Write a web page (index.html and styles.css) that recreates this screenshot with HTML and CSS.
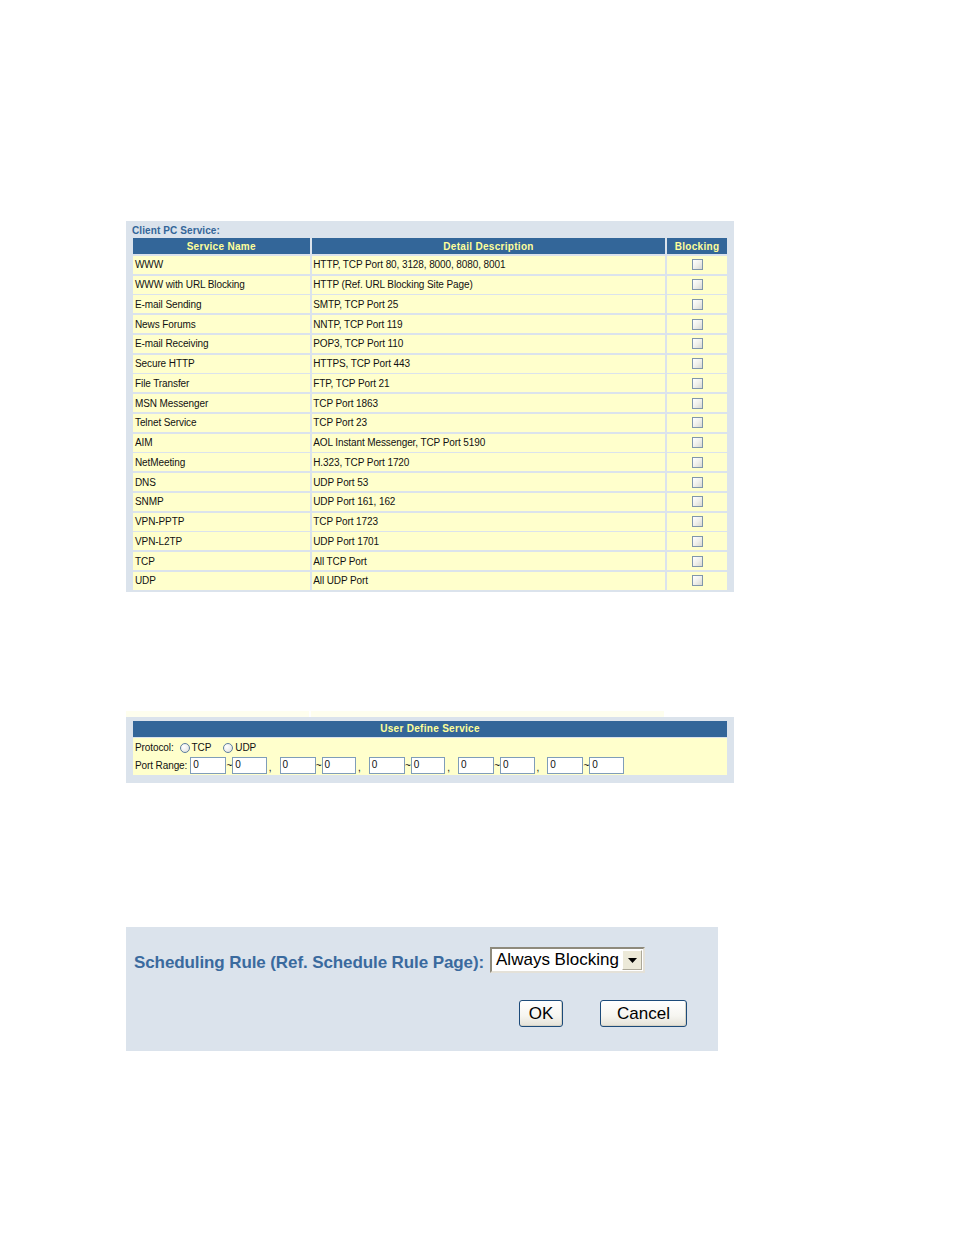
FILE: index.html
```html
<!DOCTYPE html>
<html>
<head>
<meta charset="utf-8">
<title>Client PC Service</title>
<link rel="stylesheet" href="styles.css">
</head>
<body>
<div class="page">
  <section class="panel panel-services">
    <div class="panel-title">Client PC Service:</div>
    <div class="svc-grid">
      <div class="hd">Service Name</div>
      <div class="hd">Detail Description</div>
      <div class="hd">Blocking</div>

      <div class="cell">WWW</div><div class="cell desc">HTTP, TCP Port 80, 3128, 8000, 8080, 8001</div><div class="cell chk"><span class="cbox"></span></div>
      <div class="cell">WWW with URL Blocking</div><div class="cell desc">HTTP (Ref. URL Blocking Site Page)</div><div class="cell chk"><span class="cbox"></span></div>
      <div class="cell">E-mail Sending</div><div class="cell desc">SMTP, TCP Port 25</div><div class="cell chk"><span class="cbox"></span></div>
      <div class="cell">News Forums</div><div class="cell desc">NNTP, TCP Port 119</div><div class="cell chk"><span class="cbox"></span></div>
      <div class="cell">E-mail Receiving</div><div class="cell desc">POP3, TCP Port 110</div><div class="cell chk"><span class="cbox"></span></div>
      <div class="cell">Secure HTTP</div><div class="cell desc">HTTPS, TCP Port 443</div><div class="cell chk"><span class="cbox"></span></div>
      <div class="cell">File Transfer</div><div class="cell desc">FTP, TCP Port 21</div><div class="cell chk"><span class="cbox"></span></div>
      <div class="cell">MSN Messenger</div><div class="cell desc">TCP Port 1863</div><div class="cell chk"><span class="cbox"></span></div>
      <div class="cell">Telnet Service</div><div class="cell desc">TCP Port 23</div><div class="cell chk"><span class="cbox"></span></div>
      <div class="cell">AIM</div><div class="cell desc">AOL Instant Messenger, TCP Port 5190</div><div class="cell chk"><span class="cbox"></span></div>
      <div class="cell">NetMeeting</div><div class="cell desc">H.323, TCP Port 1720</div><div class="cell chk"><span class="cbox"></span></div>
      <div class="cell">DNS</div><div class="cell desc">UDP Port 53</div><div class="cell chk"><span class="cbox"></span></div>
      <div class="cell">SNMP</div><div class="cell desc">UDP Port 161, 162</div><div class="cell chk"><span class="cbox"></span></div>
      <div class="cell">VPN-PPTP</div><div class="cell desc">TCP Port 1723</div><div class="cell chk"><span class="cbox"></span></div>
      <div class="cell">VPN-L2TP</div><div class="cell desc">UDP Port 1701</div><div class="cell chk"><span class="cbox"></span></div>
      <div class="cell">TCP</div><div class="cell desc">All TCP Port</div><div class="cell chk"><span class="cbox"></span></div>
      <div class="cell">UDP</div><div class="cell desc">All UDP Port</div><div class="cell chk"><span class="cbox"></span></div>
    </div>
  </section>

  <div class="cut-strip">
    <div class="cut-a"></div><div class="cut-b"></div><div class="cut-c"></div>
  </div>

  <section class="panel panel-user">
    <div class="hd hd-bar">User Define Service</div>
    <div class="user-body">
      <div class="urow">
        <span class="lbl">Protocol:</span>
        <span class="radio"></span><span class="rlbl">TCP</span>
        <span class="radio radio-2"></span><span class="rlbl">UDP</span>
      </div>
      <div class="urow">
        <span class="lbl lbl-port">Port Range:</span>
        <span class="pair"><span class="inp inp-a">0</span><span class="tilde">~</span><span class="inp inp-b">0</span><span class="comma">,</span></span>
        <span class="pair"><span class="inp inp-a">0</span><span class="tilde">~</span><span class="inp inp-b">0</span><span class="comma">,</span></span>
        <span class="pair"><span class="inp inp-a">0</span><span class="tilde">~</span><span class="inp inp-b">0</span><span class="comma">,</span></span>
        <span class="pair"><span class="inp inp-a">0</span><span class="tilde">~</span><span class="inp inp-b">0</span><span class="comma">,</span></span>
        <span class="pair"><span class="inp inp-a">0</span><span class="tilde">~</span><span class="inp inp-b">0</span></span>
      </div>
    </div>
  </section>

  <section class="panel panel-sched">
    <div class="sched-row">
      <span class="sched-title">Scheduling Rule (Ref. Schedule Rule Page):</span>
      <span class="select">
        <span class="select-text">Always Blocking</span>
        <span class="select-btn"><svg width="9" height="5" viewBox="0 0 9 5"><path d="M0 0h9L4.5 5z" fill="#000"/></svg></span>
      </span>
    </div>
    <div class="btn-row">
      <span class="btn btn-ok">OK</span>
      <span class="btn btn-cancel">Cancel</span>
    </div>
  </section>
</div>
</body>
</html>
```

FILE: styles.css
```css
html, body {
  margin: 0;
  padding: 0;
  background: #ffffff;
}

body {
  font-family: "Liberation Sans", Arial, sans-serif;
  color: #000;
}

.page {
  padding-top: 220.5px;
  padding-left: 126px;
}

.panel {
  background: #dbe3ec;
  box-sizing: border-box;
}

/* ---------- Panel 1 ---------- */
.panel-services {
  width: 608px;
  padding: 4px 7px 1.75px 6.5px;
}

.panel-title {
  font-size: 10px;
  font-weight: bold;
  color: #336699;
  line-height: 12px;
  height: 12px;
  margin-bottom: 1.5px;
  margin-left: -0.5px;
  letter-spacing: 0.1px;
}

.svc-grid {
  display: grid;
  grid-template-columns: 177.5px 353.5px 60px;
  column-gap: 1.75px;
  row-gap: 1.75px;
  grid-template-rows: 16px;
  grid-auto-rows: 18px;
}

.hd {
  background: #336699;
  color: #ffff99;
  font-size: 10px;
  font-weight: bold;
  letter-spacing: 0.3px;
  display: flex;
  align-items: center;
  justify-content: center;
}

.cell {
  background: #ffffcc;
  font-size: 10px;
  letter-spacing: -0.1px;
  display: flex;
  align-items: center;
  padding-left: 2.5px;
  white-space: nowrap;
  color: #111;
}

.cell.desc {
  padding-left: 1.5px;
}

.cell.chk {
  justify-content: center;
  padding-left: 0;
}

.cbox {
  display: block;
  width: 9px;
  height: 9px;
  border: 1px solid #8096ac;
  background: linear-gradient(135deg, #ffffff 0%, #f0f0ec 50%, #d8d8d2 100%);
  margin-left: 1px;
}

/* ---------- cut strip ---------- */
.cut-strip {
  margin-top: 119px;
  width: 601px;
  height: 6px;
  display: flex;
  gap: 2px;
}

.cut-a, .cut-b, .cut-c {
  background: #fefeee;
}
.cut-a { width: 183px; }
.cut-b { width: 353px; }
.cut-c { width: 60px; background: #ffffff; }

/* ---------- Panel 2 ---------- */
.panel-user {
  margin-top: 0.5px;
  width: 608px;
  height: 65.5px;
  padding: 4px 7px 0 7px;
}

.hd-bar {
  height: 15.5px;
  margin-bottom: 1px;
}

.user-body {
  background: #ffffcc;
  height: 37.5px;
  padding: 1px 0 0 2px;
  box-sizing: border-box;
  font-size: 10px;
  letter-spacing: -0.1px;
  color: #111;
}

.urow {
  display: flex;
  align-items: center;
  height: 18px;
  white-space: nowrap;
}

.lbl {
  margin-right: 6px;
}

.lbl-port {
  margin-right: 3px;
}

.radio {
  display: inline-block;
  width: 8px;
  height: 8px;
  border: 1px solid #5d7e9f;
  border-radius: 50%;
  background: radial-gradient(circle at 35% 35%, #ffffff 0%, #ececea 60%, #d4d4ce 100%);
  margin-right: 2px;
}

.radio-2 {
  margin-left: 12px;
}

.pair {
  display: inline-flex;
  align-items: center;
}

.inp {
  box-sizing: border-box;
  height: 16.5px;
  border: 1px solid #7f9db9;
  background: #ffffff;
  font-size: 10px;
  line-height: 14.5px;
  padding-left: 2px;
}

.inp-a { width: 36px; }
.inp-b { width: 34.5px; }

.tilde {
  width: 6px;
  text-align: center;
  font-size: 10px;
}

.comma {
  width: 12.75px;
  padding-left: 2px;
  box-sizing: border-box;
  font-size: 10px;
  align-self: flex-end;
  line-height: 12px;
}

/* ---------- Panel 3 ---------- */
.panel-sched {
  margin-top: 144.5px;
  width: 592px;
  height: 124px;
  padding: 20px 31px 0 8px;
}

.sched-row {
  display: flex;
  align-items: center;
  height: 26px;
}

.sched-title {
  font-size: 17px;
  font-weight: bold;
  color: #3a6a9e;
  letter-spacing: -0.1px;
  margin-right: 6px;
  margin-top: 6px;
  white-space: nowrap;
}

.select {
  box-sizing: border-box;
  width: 155px;
  height: 26px;
  display: flex;
  align-items: center;
  background: #ffffff;
  border: 2px solid;
  border-color: #8e8a7c #e4e1d8 #e4e1d8 #8e8a7c;
}

.select-text {
  flex: 1;
  font-size: 17px;
  padding-left: 4px;
  white-space: nowrap;
}

.select-btn {
  width: 20px;
  height: 20px;
  margin-right: 1px;
  box-sizing: border-box;
  background: #ece9d8;
  border: 1px solid;
  border-color: #ffffff #aca899 #aca899 #ffffff;
  display: flex;
  align-items: center;
  justify-content: center;
}

.btn-row {
  display: flex;
  justify-content: flex-end;
  gap: 37px;
  margin-top: 27px;
}

.btn {
  box-sizing: border-box;
  height: 27px;
  border: 1px solid #1c4a79;
  border-radius: 3px;
  background: linear-gradient(#ffffff 0%, #f6f5f0 60%, #e4e2d8 100%);
  box-shadow: inset -1px -1px 0 #d6d3c6;
  font-size: 17px;
  display: flex;
  align-items: center;
  justify-content: center;
}

.btn-ok { width: 44px; }
.btn-cancel { width: 87px; }
```
